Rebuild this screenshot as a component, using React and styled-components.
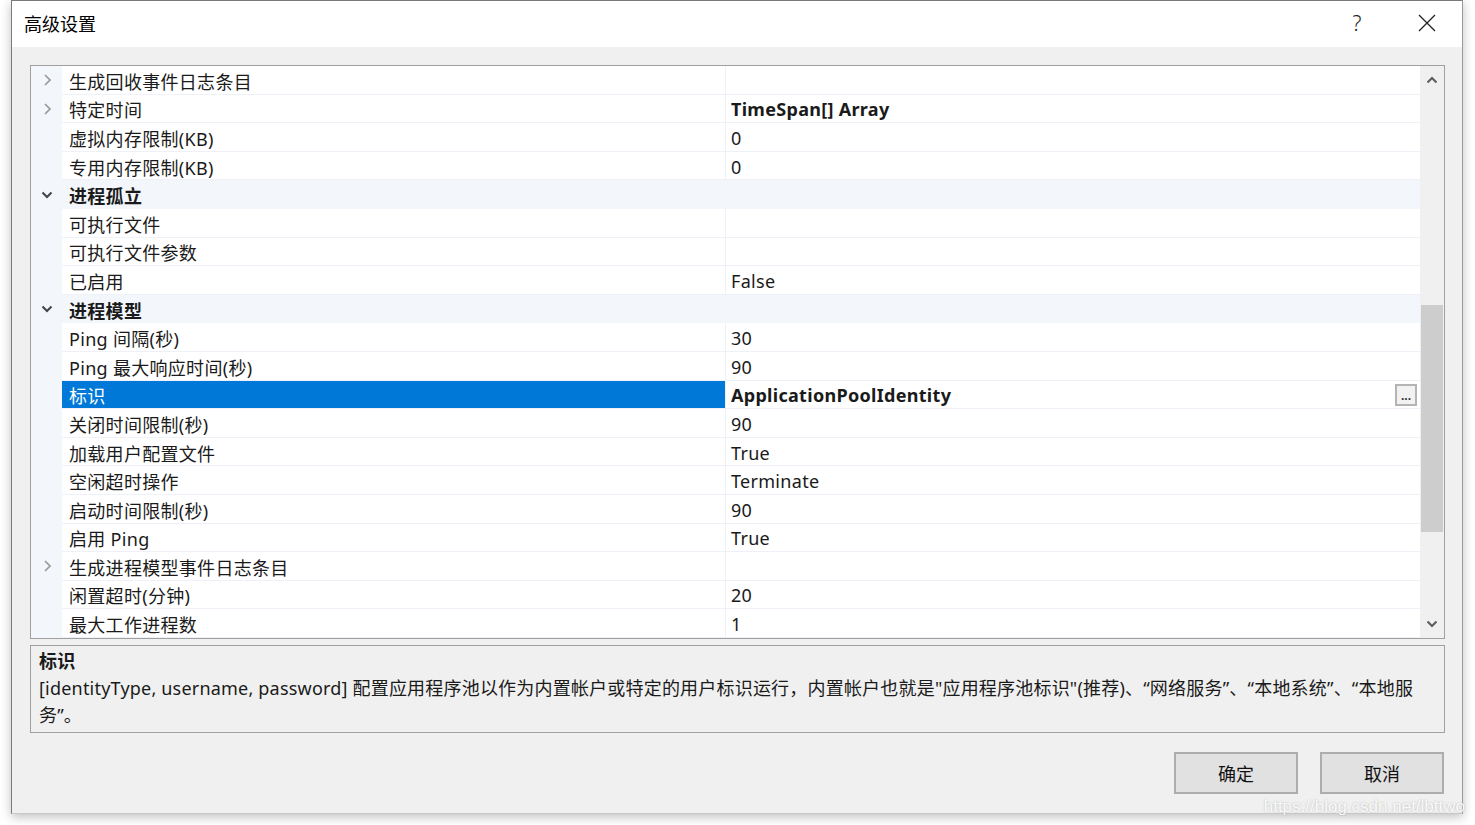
import React from 'react'
import styled, { createGlobalStyle } from 'styled-components';

const GlobalStyle = createGlobalStyle`
  html, body {
    margin: 0;
    padding: 0;
    background: #ffffff;
    font-family: "Noto Sans", "Noto Sans CJK SC", sans-serif;
    color: #1a1a1a;
  }
`;

const Page = styled.div`
  width: 1475px;
  height: 825px;
  padding-left: 11px;
  box-sizing: border-box;
  overflow: hidden;
  position: relative;
`;

const Dialog = styled.div`
  width: 1452px;
  height: 814px;
  box-sizing: border-box;
  border: 1px solid #7a7a7a;
  border-bottom-color: #c8c8c8;
  border-right-color: #9a9a9a;
  background: #f0f0f0;
  box-shadow: 0 3px 10px rgba(0, 0, 0, 0.25);
  display: flex;
  flex-direction: column;
`;

const TitleBar = styled.div`
  height: 46px;
  background: #ffffff;
  display: flex;
  align-items: center;
  padding-left: 12px;
  padding-bottom: 2px;
  box-sizing: border-box;
`;

const Title = styled.div`
  flex: 1;
  font-size: 18px;
  font-family: "Noto Sans CJK SC", sans-serif;
  color: #000;
`;

const TitleButton = styled.div`
  width: 70px;
  display: flex;
  justify-content: center;
  align-items: center;
  font-size: 21px;
  color: #222;
  font-family: "Noto Sans", sans-serif;
  font-weight: 300;
`;

const Body = styled.div`
  flex: 1;
  display: flex;
  flex-direction: column;
  padding: 18px 17px 0 18px;
`;

const Grid = styled.div`
  height: 574px;
  box-sizing: border-box;
  border: 1px solid #a0a0a0;
  background: #ffffff;
  display: flex;
`;

const Rows = styled.div`
  flex: 1;
  display: flex;
  flex-direction: column;
`;

const Row = styled.div`
  height: 28.6px;
  display: grid;
  grid-template-columns: 31px 663px 1fr;
  background: ${p => (p.$category ? '#f3f6fb' : '#ffffff')};
  font-size: 18px;
  letter-spacing: 0.3px;
  font-weight: ${p => (p.$category ? 700 : 400)};
`;

const Gutter = styled.div`
  background: #f3f6fb;
  display: flex;
  align-items: center;
  justify-content: center;
  color: #777;
`;

const Cell = styled.div`
  display: flex;
  align-items: center;
  padding-left: ${p => (p.$value ? '5px' : '7px')};
  padding-top: 2px;
  border-bottom: 1px solid ${p => (p.$category ? '#f3f6fb' : '#eef1f7')};
  border-left: ${p => (p.$value && !p.$category ? '1px solid #eef1f7' : 'none')};
  background: ${p => (p.$selected ? '#0078d7' : 'transparent')};
  color: ${p => (p.$selected ? '#ffffff' : '#1a1a1a')};
  font-weight: ${p => (p.$bold ? 700 : 'inherit')};
  white-space: nowrap;
  overflow: hidden;
  box-sizing: border-box;
  position: relative;
`;

const DotsButton = styled.div`
  position: absolute;
  right: 3px;
  top: 3px;
  width: 22px;
  height: 22px;
  box-sizing: border-box;
  border: 2px solid #b4b4b4;
  background: #f2f2f2;
  font-size: 12px;
  font-weight: 700;
  letter-spacing: 0;
  color: #333;
  display: flex;
  align-items: flex-end;
  justify-content: center;
  line-height: 10px;
  padding-bottom: 3px;
`;

const Scrollbar = styled.div`
  width: 24px;
  background: #f0f0f0;
  display: flex;
  flex-direction: column;
  align-items: stretch;
`;

const ScrollArrow = styled.div`
  height: 28px;
  display: flex;
  align-items: center;
  justify-content: center;
`;

const Track = styled.div`
  flex: 1;
  display: flex;
  flex-direction: column;
  padding: 211px 1px 0 1px;
`;

const Thumb = styled.div`
  height: 227px;
  background: #cdcdcd;
`;

const Description = styled.div`
  margin-top: 6px;
  height: 88px;
  box-sizing: border-box;
  border: 1px solid #a0a0a0;
  padding: 2px 8px;
  font-size: 18px;
  letter-spacing: 0.2px;
  line-height: 27px;
  color: #1a1a1a;
`;

const DescTitle = styled.div`
  font-weight: 700;
`;

const Footer = styled.div`
  display: flex;
  justify-content: flex-end;
  gap: 22px;
  padding-top: 19px;
  padding-right: 1px;
`;

const Button = styled.button`
  width: 124px;
  height: 42px;
  background: #e1e1e1;
  border: 2px solid #adadad;
  font-family: "Noto Sans CJK SC", sans-serif;
  font-size: 18px;
  color: #111;
`;

const Watermark = styled.div`
  position: absolute;
  right: 10px;
  bottom: 8px;
  font-family: "Liberation Sans", sans-serif;
  font-size: 17px;
  color: rgba(255, 255, 255, 0.9);
  text-shadow: 0 0 2px rgba(0, 0, 0, 0.25);
`;

const Chevron = ({ open }) => (
  <svg width="12" height="12" viewBox="0 0 12 12">
    {open ? (
      <path d="M1.5 3.5 L6 8 L10.5 3.5" fill="none" stroke="#444" strokeWidth="2" />
    ) : (
      <path d="M4 1 L9 6 L4 11" fill="none" stroke="#999" strokeWidth="1.7" />
    )}
  </svg>
);

const rows = [
  { name: '生成回收事件日志条目', value: '', arrow: 'closed' },
  { name: '特定时间', value: 'TimeSpan[] Array', arrow: 'closed', bold: true },
  { name: '虚拟内存限制(KB)', value: '0' },
  { name: '专用内存限制(KB)', value: '0' },
  { name: '进程孤立', category: true },
  { name: '可执行文件', value: '' },
  { name: '可执行文件参数', value: '' },
  { name: '已启用', value: 'False' },
  { name: '进程模型', category: true },
  { name: 'Ping 间隔(秒)', value: '30' },
  { name: 'Ping 最大响应时间(秒)', value: '90' },
  { name: '标识', value: 'ApplicationPoolIdentity', selected: true, bold: true },
  { name: '关闭时间限制(秒)', value: '90' },
  { name: '加载用户配置文件', value: 'True' },
  { name: '空闲超时操作', value: 'Terminate' },
  { name: '启动时间限制(秒)', value: '90' },
  { name: '启用 Ping', value: 'True' },
  { name: '生成进程模型事件日志条目', value: '', arrow: 'closed' },
  { name: '闲置超时(分钟)', value: '20' },
  { name: '最大工作进程数', value: '1' },
];

function App() {
  return (
    <>
      <GlobalStyle />
      <Page>
        <Dialog>
          <TitleBar>
            <Title>高级设置</Title>
            <TitleButton>?</TitleButton>
            <TitleButton>
              <svg width="18" height="18" viewBox="0 0 18 18">
                <path d="M1 1 L17 17 M17 1 L1 17" stroke="#222" strokeWidth="1.3" />
              </svg>
            </TitleButton>
          </TitleBar>
          <Body>
            <Grid>
              <Rows>
                {rows.map((r, i) => (
                  <Row key={i} $category={r.category}>
                    <Gutter>
                      {r.category && <Chevron open />}
                      {r.arrow === 'closed' && <Chevron />}
                    </Gutter>
                    <Cell $category={r.category} $selected={r.selected}>{r.name}</Cell>
                    <Cell $value $category={r.category} $bold={r.bold}>
                      {r.value}
                      {r.selected && <DotsButton>...</DotsButton>}
                    </Cell>
                  </Row>
                ))}
              </Rows>
              <Scrollbar>
                <ScrollArrow>
                  <svg width="12" height="8" viewBox="0 0 12 8">
                    <path d="M1.5 6.5 L6 2 L10.5 6.5" fill="none" stroke="#606060" strokeWidth="2.2" />
                  </svg>
                </ScrollArrow>
                <Track>
                  <Thumb />
                </Track>
                <ScrollArrow>
                  <svg width="12" height="8" viewBox="0 0 12 8">
                    <path d="M1.5 1.5 L6 6 L10.5 1.5" fill="none" stroke="#606060" strokeWidth="2.2" />
                  </svg>
                </ScrollArrow>
              </Scrollbar>
            </Grid>
            <Description>
              <DescTitle>标识</DescTitle>
              <div>
                [identityType, username, password] 配置应用程序池以作为内置帐户或特定的用户标识运行，内置帐户也就是"应用程序池标识"(推荐)、“网络服务”、“本地系统”、“本地服
                <br />
                务”。
              </div>
            </Description>
            <Footer>
              <Button>确定</Button>
              <Button>取消</Button>
            </Footer>
          </Body>
        </Dialog>
        <Watermark>https://blog.csdn.net/lbttwo</Watermark>
      </Page>
    </>
  )
}

export default App
